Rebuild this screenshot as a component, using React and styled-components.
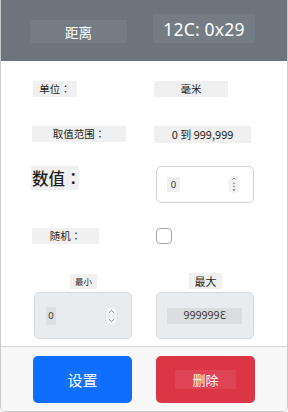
import React from "react";
import styled, { createGlobalStyle } from "styled-components";

const Global = createGlobalStyle`
  html, body { margin: 0; padding: 0; background: #ffffff; }
  body { font-family: "Noto Sans", "Noto Sans CJK SC", sans-serif; }
  * { box-sizing: border-box; }
`;

const Card = styled.div`
  width: 288px;
  height: 412px;
  border: 1px solid #c9cccf;
  border-top: none;
  border-radius: 0 0 5px 5px;
  overflow: hidden;
  display: flex;
  flex-direction: column;
`;

const Header = styled.div`
  height: 61px;
  background: #6c757d;
  display: flex;
  align-items: flex-start;
  padding-left: 29px;
  gap: 26px;
`;

const HeadTitle = styled.div`
  margin-top: 20px;
  width: 97px;
  height: 23px;
  background: rgba(255, 255, 255, 0.06);
  color: #fff;
  font-family: "Noto Sans CJK SC", sans-serif;
  font-size: 13.5px;
  display: flex;
  align-items: center;
  justify-content: center;
`;

const HeadCode = styled.div`
  margin-top: 14px;
  width: 102px;
  height: 29px;
  background: rgba(255, 255, 255, 0.06);
  color: #fff;
  font-family: "Noto Sans", sans-serif;
  font-size: 17.5px;
  display: flex;
  align-items: center;
  justify-content: center;
  letter-spacing: 0.2px;
`;

const Body = styled.div`
  flex: 1;
  background: #fff;
  padding-left: 30px;
  display: flex;
  flex-direction: column;
  border-bottom: 1px solid #d6d8db;
`;

const Row = styled.div`
  display: grid;
  grid-template-columns: 97px 101px;
  column-gap: 26px;
  align-items: ${(p) => p.$align || "start"};
  margin-top: ${(p) => p.$mt}px;
`;

const Tag = styled.div`
  width: ${(p) => p.$w}px;
  height: ${(p) => p.$h || 16}px;
  margin-left: ${(p) => p.$ml || 0}px;
  background: #f0f0f0;
  color: #1e1e1e;
  font-family: "Noto Sans CJK SC", sans-serif;
  font-size: ${(p) => p.$fs || 10.5}px;
  font-weight: ${(p) => p.$fw || 400};
  display: flex;
  align-items: center;
  justify-content: ${(p) => p.$justify || "center"};
  padding-left: ${(p) => p.$pl || 0}px;
  white-space: nowrap;
  line-height: 1;
`;

const Colon = styled.span`
  font-family: "Noto Sans CJK JP", sans-serif;
`;

const NumberBox = styled.div`
  width: 98px;
  height: ${(p) => p.$h}px;
  margin-left: ${(p) => p.$ml || 0}px;
  border: 1px solid ${(p) => (p.$disabled ? "#d5d8dc" : "#d0d3d6")};
  border-radius: 5px;
  background: ${(p) => (p.$disabled ? "#e9ecef" : "#fff")};
  display: flex;
  align-items: center;
  padding-left: ${(p) => p.$pl}px;
  padding-right: ${(p) => p.$pr || 0}px;
  justify-content: ${(p) => p.$justify || "space-between"};
`;

const ValueChip = styled.div`
  width: ${(p) => p.$w}px;
  height: ${(p) => p.$h}px;
  background: ${(p) => p.$bg || "#ececec"};
  color: #333;
  font-family: "Noto Sans", sans-serif;
  font-size: ${(p) => p.$fs || 10}px;
  display: flex;
  align-items: center;
  justify-content: center;
  line-height: 1;
`;

const Mirror = styled.span`
  display: inline-block;
  transform: scaleX(-1);
`;

const Check = styled.div`
  width: 16px;
  height: 16px;
  border: 1px solid #9ea4a9;
  border-radius: 4px;
  background: #fff;
  margin-left: 2px;
`;

const Footer = styled.div`
  height: 64px;
  background: #f7f7f8;
  display: flex;
  align-items: flex-start;
  padding-top: 9px;
  padding-left: 32px;
  gap: 24px;
`;

const Button = styled.div`
  width: 99px;
  height: 47px;
  border-radius: 5px;
  background: ${(p) => p.$bg};
  display: flex;
  align-items: center;
  justify-content: center;
`;

const BtnLabel = styled.span`
  background: rgba(255, 255, 255, ${(p) => p.$a});
  color: #fff;
  font-family: "Noto Sans CJK SC", sans-serif;
  font-size: ${(p) => p.$fs}px;
  padding: 1px ${(p) => p.$px}px;
  line-height: 17px;
`;

const SpinA = () => (
  <svg width="12" height="19" viewBox="0 0 12 19">
    <rect x="0.5" y="0.5" width="11" height="18" rx="5" fill="#f3f3f3" />
    <path d="M4.5 4.5 L6 3 L7.5 4.5" stroke="#777" strokeWidth="0.8" fill="none" />
    <circle cx="6" cy="8.3" r="0.7" fill="#555" />
    <circle cx="6" cy="11.3" r="0.7" fill="#555" />
    <path d="M4.6 14.5 L7.4 14.5 L6 16 Z" fill="#333" />
  </svg>
);

const SpinB = () => (
  <svg width="13" height="20" viewBox="0 0 13 20">
    <rect x="0.5" y="0.5" width="12" height="19" rx="6" fill="#f7f8f9" stroke="#dfe2e5" />
    <line x1="1" y1="10" x2="12" y2="10" stroke="#dfe2e5" strokeWidth="0.8" />
    <path d="M3.8 7 L6.5 4.5 L9.2 7" stroke="#8a9096" strokeWidth="1" fill="none" />
    <path d="M3.8 13 L6.5 15.5 L9.2 13" stroke="#8a9096" strokeWidth="1" fill="none" />
  </svg>
);

export default function App() {
  return (
    <>
      <Global />
      <Card>
        <Header>
          <HeadTitle>距离</HeadTitle>
          <HeadCode>12C: 0x29</HeadCode>
        </Header>
        <Body>
          <Row $mt={20}>
            <Tag $w={44} $ml={2}>单位<Colon>：</Colon></Tag>
            <Tag $w={74}>毫米</Tag>
          </Row>
          <Row $mt={29}>
            <Tag $w={94} $ml={1}>取值范围<Colon>：</Colon></Tag>
            <Tag $w={97} $h={17} $fs={11}>0 到 999,999</Tag>
          </Row>
          <Row $mt={23}>
            <Tag $w={48} $h={24} $fs={16.5} $fw={500} $justify="flex-start" $pl={1}>数值<Colon>：</Colon></Tag>
            <NumberBox $h={37} $ml={2} $pl={10} $pr={13}>
              <ValueChip $w={13} $h={15} $bg="#efefef" $fs={9.5}>0</ValueChip>
              <SpinA />
            </NumberBox>
          </Row>
          <Row $mt={25}>
            <Tag $w={67} $ml={1}>随机<Colon>：</Colon></Tag>
            <Check />
          </Row>
          <Row $mt={29} $align="end">
            <Tag $w={27} $h={15} $fs={8.5} $ml={39}>最小</Tag>
            <Tag $w={33} $h={16} $fs={11} $ml={35}>最大</Tag>
          </Row>
          <Row $mt={3}>
            <NumberBox $h={47} $disabled $ml={3} $pl={11} $pr={13}>
              <ValueChip $w={10} $h={18} $bg="#dcdfe2" $fs={9.5}>0</ValueChip>
              <SpinB />
            </NumberBox>
            <NumberBox $h={47} $disabled $ml={2} $pl={10} $justify="flex-start">
              <ValueChip $w={75} $h={16} $bg="#dadde0" $fs={10.5}>999999<Mirror>3</Mirror></ValueChip>
            </NumberBox>
          </Row>
        </Body>
        <Footer>
          <Button $bg="#0d6efd">
            <BtnLabel $a={0.03} $fs={15} $px={2}>设置</BtnLabel>
          </Button>
          <Button $bg="#dc3545">
            <BtnLabel $a={0.08} $fs={13} $px={17}>删除</BtnLabel>
          </Button>
        </Footer>
      </Card>
    </>
  );
}
